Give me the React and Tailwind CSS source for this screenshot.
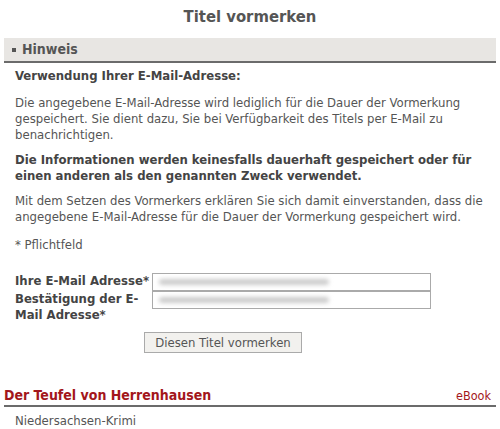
export default function App() {
  return (
    <div
      className="w-[500px] h-[429px] bg-white text-[#555] overflow-hidden"
      style={{ fontFamily: '"DejaVu Sans Condensed", "DejaVu Sans", sans-serif' }}
    >
      <h1 className="text-center font-bold text-[16.5px] leading-[20px] pt-[7px] text-[#555]">
        Titel vormerken
      </h1>

      <div className="mx-[4px] mt-[11px] h-[25px] bg-[#e8e6e3] border-b-2 border-[#6b6b6b] flex items-center pl-[8px]">
        <span className="w-[4px] h-[4px] bg-[#555] mr-[6px]"></span>
        <span className="font-bold text-[14px] text-[#555]">Hinweis</span>
      </div>

      <div className="px-[15px] text-[13px] leading-[16px]">
        <p className="font-bold text-[#444] mt-[5px]">Verwendung Ihrer E-Mail-Adresse:</p>
        <p className="mt-[11px]">
          Die angegebene E-Mail-Adresse wird lediglich für die Dauer der Vormerkung gespeichert. Sie dient dazu, Sie bei Verfügbarkeit des Titels per E-Mail zu benachrichtigen.
        </p>
        <p className="font-bold text-[#444] mt-[9px]">
          Die Informationen werden keinesfalls dauerhaft gespeichert oder für einen anderen als den genannten Zweck verwendet.
        </p>
        <p className="mt-[9px]">
          Mit dem Setzen des Vormerkers erklären Sie sich damit einverstanden, dass die angegebene E-Mail-Adresse für die Dauer der Vormerkung gespeichert wird.
        </p>
        <p className="mt-[12px]">* Pflichtfeld</p>

        <div className="mt-[20px] flex flex-col">
          <div className="flex items-start">
            <label className="w-[137px] font-bold text-[#444]">Ihre E-Mail Adresse*</label>
            <div className="w-[279px] h-[18px] border border-[#aaa] bg-white flex items-center px-[6px]">
              <span className="block w-[170px] h-[6px] rounded-full bg-[#ccc] blur-[2px]"></span>
            </div>
          </div>
          <div className="flex items-start">
            <label className="w-[137px] font-bold text-[#444] pr-[8px]">Bestätigung der E-Mail Adresse*</label>
            <div className="w-[279px] h-[18px] border border-[#aaa] bg-white flex items-center px-[6px]">
              <span className="block w-[170px] h-[6px] rounded-full bg-[#ccc] blur-[2px]"></span>
            </div>
          </div>
        </div>

        <div className="mt-[9px] pl-[129px]">
          <button className="w-[158px] h-[21px] border border-[#aaa] bg-[#f2f1ee] text-[13px] leading-[16px] text-[#555]">
            Diesen Titel vormerken
          </button>
        </div>
      </div>

      <div className="mx-[4px] mt-[33px] flex items-end justify-between border-b-2 border-[#6b6b6b] pb-[1px]">
        <span className="font-bold text-[14px] leading-[18px] text-[#a3161b]">Der Teufel von Herrenhausen</span>
        <span className="text-[12.5px] leading-[16px] text-[#a3161b] pr-[5px]">eBook</span>
      </div>
      <p className="px-[15px] mt-[6px] text-[13px] leading-[16px]">Niedersachsen-Krimi</p>
    </div>
  );
}
